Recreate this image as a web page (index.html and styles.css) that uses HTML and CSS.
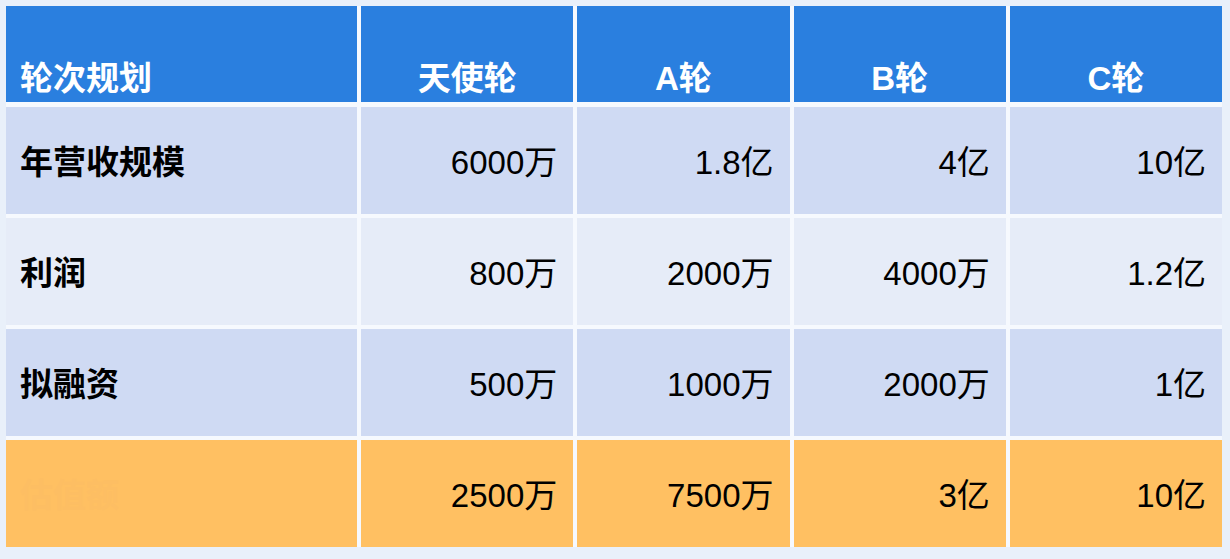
FILE: index.html
```html
<!DOCTYPE html>
<html lang="zh">
<head>
<meta charset="utf-8">
<title>轮次规划</title>
<link rel="stylesheet" href="styles.css">
</head>
<body>
<div class="table">
  <div class="cell head first">轮次规划</div>
  <div class="cell head">天使轮</div>
  <div class="cell head">A轮</div>
  <div class="cell head">B轮</div>
  <div class="cell head">C轮</div>

  <div class="cell label odd">年营收规模</div>
  <div class="cell num odd">6000万</div>
  <div class="cell num odd">1.8亿</div>
  <div class="cell num odd">4亿</div>
  <div class="cell num odd">10亿</div>

  <div class="cell label even">利润</div>
  <div class="cell num even">800万</div>
  <div class="cell num even">2000万</div>
  <div class="cell num even">4000万</div>
  <div class="cell num even">1.2亿</div>

  <div class="cell label odd">拟融资</div>
  <div class="cell num odd">500万</div>
  <div class="cell num odd">1000万</div>
  <div class="cell num odd">2000万</div>
  <div class="cell num odd">1亿</div>

  <div class="cell label total ghost">估值额</div>
  <div class="cell num total">2500万</div>
  <div class="cell num total">7500万</div>
  <div class="cell num total">3亿</div>
  <div class="cell num total">10亿</div>
</div>
</body>
</html>
```

FILE: styles.css
```css
html, body {
  margin: 0;
  padding: 0;
}
body {
  background: #e9f0fa;
  padding: 6px 8px 11px 6px;
  font-family: "Liberation Sans", "Noto Sans CJK SC", sans-serif;
}
.table {
  display: grid;
  grid-template-columns: 351px repeat(4, 1fr);
  grid-template-rows: 97px repeat(4, 107px);
  column-gap: 4px;
  row-gap: 4px;
  width: 1216px;
  background: #f6f9fe;
}
.cell {
  display: flex;
  align-items: center;
  font-size: 33px;
  color: #000;
  line-height: 1;
  padding-top: 4px;
}
.head {
  background: #2a7fdf;
  color: #fff;
  font-weight: bold;
  justify-content: center;
  align-items: flex-end;
  padding-top: 0;
  padding-bottom: 7px;
  margin-bottom: 1px;
}
.head.first {
  justify-content: flex-start;
  padding-left: 14px;
}
.label {
  font-weight: bold;
  padding-left: 14px;
}
.num {
  justify-content: flex-end;
  padding-right: 16px;
}
.odd {
  background: #cfdaf3;
}
.even {
  background: #e6ecf8;
}
.total {
  background: #ffc062;
}
.ghost {
  color: #fdbe63;
}
```
